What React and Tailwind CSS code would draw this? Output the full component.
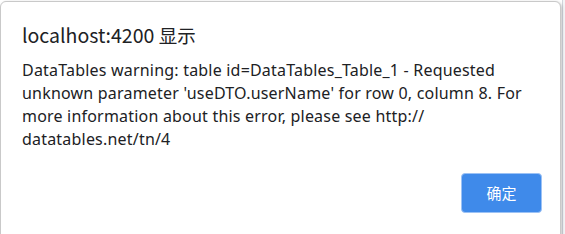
import React from 'react'

export default function App() {
    return (
        <div className="relative h-[234px] w-[565px] overflow-hidden bg-white" style={{ fontFamily: '"Noto Sans CJK SC", "Noto Sans", sans-serif' }}>
            <div className="absolute right-0 top-0 h-full w-[3px] border-l border-gray-300 bg-gray-100"></div>
            <div className="absolute left-0 top-[1px] h-[260px] w-[561px] rounded-[6px] border border-[#c9c9c9] bg-white shadow-[1px_1px_3px_rgba(0,0,0,0.25)]">
                <div className="pl-[21px] pr-4 pt-[19px]">
                    <div className="text-[19.5px] leading-[28px] text-[#202124]">localhost:4200 <span className="text-[18.5px]">显示</span></div>
                    <div className="mt-[10px] text-[16px] leading-[23px] tracking-[0.2px] text-[#202124]" style={{ fontFamily: '"Noto Sans", "Noto Sans CJK SC", sans-serif' }}>
                        DataTables warning: table id=DataTables_Table_1 - Requested unknown parameter 'useDTO.userName' for row 0, column 8. For more information about this error, please see http://<br />datatables.net/tn/4
                    </div>
                    <div className="mt-[22px] flex justify-end pr-[2px]">
                        <button className="h-[40px] w-[81px] rounded-[4px] border border-[#9cc2f5] bg-[#3f8aea] text-[15px] text-white">确定</button>
                    </div>
                </div>
            </div>
        </div>
    )
}
